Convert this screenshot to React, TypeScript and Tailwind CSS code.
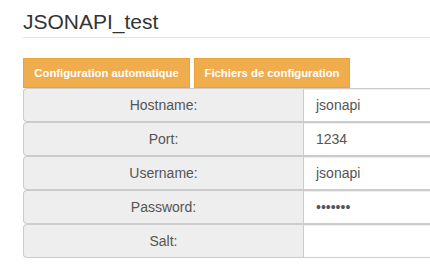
import React from "react";

const rows = [
  { label: "Hostname:", value: "jsonapi" },
  { label: "Port:", value: "1234" },
  { label: "Username:", value: "jsonapi" },
  { label: "Password:", value: "•••••••" },
  { label: "Salt:", value: "" },
];

const App = () => {
  return (
    <div className="w-[430px] h-[265px] overflow-hidden bg-white font-['Liberation_Sans',Arial,sans-serif]">
      <div className="pl-[23px]">
        <h1 className="pt-[10px] pb-[3px] text-[21px] leading-[24px] text-[#333] border-b border-[#e5e5e5]">
          JSONAPI_test
        </h1>

        {/* onglets */}
        <div className="mt-[20px] flex gap-[4px]">
          <button className="w-[167px] h-[30px] bg-[#f0ad4e] border border-[#eea236] text-white text-[11.3px] font-bold">
            Configuration automatique
          </button>
          <button className="w-[156px] h-[30px] bg-[#f0ad4e] border border-[#eea236] text-white text-[11.3px] font-bold">
            Fichiers de configuration
          </button>
        </div>

        <div className="flex flex-col w-[500px]">
          {rows.map((r) => (
            <div key={r.label} className="flex h-[34px]">
              <div className="w-[280px] shrink-0 flex items-center justify-center bg-[#eee] border border-r-0 border-[#ccc] rounded-l-[4px] text-[14px] text-[#555]">
                {r.label}
              </div>
              <div className="flex-1 flex items-center px-[12px] bg-white border border-[#ccc] shadow-[inset_0_1px_1px_rgba(0,0,0,0.075)] text-[14px] text-[#555]">
                {r.value}
              </div>
            </div>
          ))}
        </div>
      </div>
    </div>
  );
};

export default App;
